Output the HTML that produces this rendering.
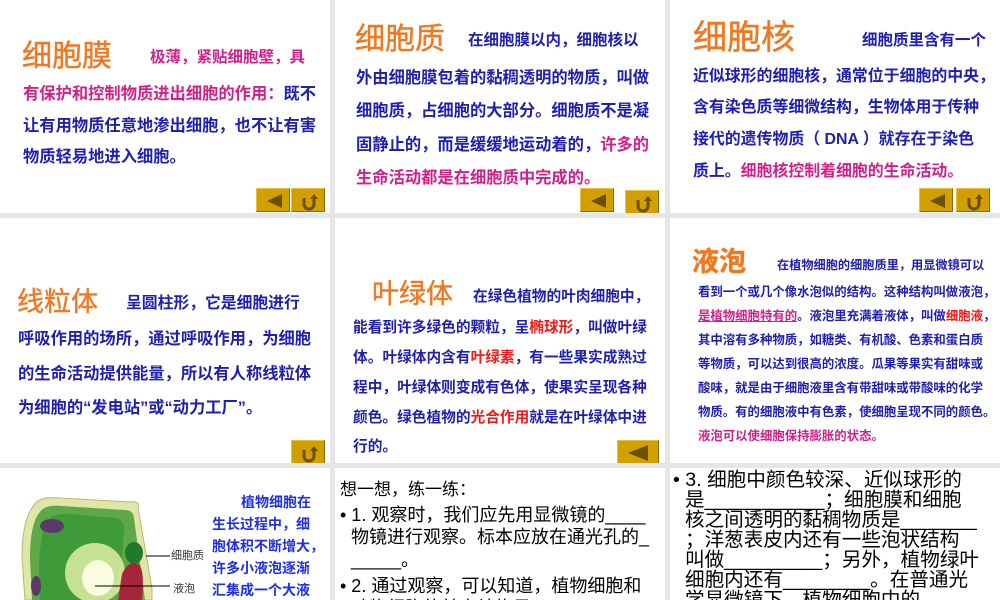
<!DOCTYPE html>
<html><head><meta charset="utf-8"><style>
*{margin:0;padding:0;box-sizing:border-box}
body{width:1000px;height:600px;background:#e6e6e6;position:relative;overflow:hidden;font-family:"Liberation Sans","Noto Sans CJK SC",sans-serif}
.p{position:absolute;background:#fff;overflow:hidden}
.l{position:absolute;white-space:nowrap;font-weight:bold;color:#2020b0}
.t{position:absolute;white-space:nowrap;color:#f07820;font-weight:normal;-webkit-text-stroke:0.4px #f07820}
.m{color:#d0208a}.r{color:#f01818}
.b{position:absolute;width:34px;height:24px;background:#d1a000;border:1px solid #8a6a00;border-top-color:#e8c040;border-left-color:#e8c040}
.b svg{position:absolute;left:0;top:0}
.k{position:absolute;white-space:nowrap;color:#000;font-size:18px}
</style></head><body>

<!-- Row1 -->
<div class="p" style="left:0;top:0;width:330px;height:213px">
<div class="t" style="left:22px;top:31px;font-size:30px">细胞膜</div>
<div class="l m" style="left:150px;top:45px;font-size:15.5px">极薄，紧贴细胞壁，具</div>
<div class="l" style="left:23px;top:80px;font-size:16.3px"><span class="m">有保护和控制物质进出细胞的作用：</span>既不</div>
<div class="l" style="left:23px;top:112px;font-size:16.3px">让有用物质任意地渗出细胞，也不让有害</div>
<div class="l" style="left:23px;top:143px;font-size:16.3px">物质轻易地进入细胞。</div>
<div class="b" style="left:256px;top:188px"><svg width="34" height="24"><path d="M10 12 L25 5 L25 19Z" fill="#6a5000"/></svg></div>
<div class="b" style="left:291px;top:188px"><svg width="38" height="24"><path d="M12 9 V15 A5 5 0 0 0 22 15 V9" stroke="#6a5000" stroke-width="3" fill="none"/><path d="M18 10 L22 5 L26 10Z" fill="#6a5000"/></svg></div>
</div>

<div class="p" style="left:335px;top:0;width:330px;height:213px">
<div class="t" style="left:20px;top:14px;font-size:30px">细胞质</div>
<div class="l" style="left:133px;top:28px;font-size:15.5px">在细胞膜以内，细胞核以</div>
<div class="l" style="left:21px;top:64px;font-size:16.3px">外由细胞膜包着的黏稠透明的物质，叫做</div>
<div class="l" style="left:21px;top:97px;font-size:16.3px">细胞质，占细胞的大部分。细胞质不是凝</div>
<div class="l" style="left:21px;top:131px;font-size:16.3px">固静止的，而是缓缓地运动着的，<span class="m">许多的</span></div>
<div class="l m" style="left:21px;top:164px;font-size:16.3px">生命活动都是在细胞质中完成的。</div>
<div class="b" style="left:245px;top:188px"><svg width="34" height="24"><path d="M10 12 L25 5 L25 19Z" fill="#6a5000"/></svg></div>
<div class="b" style="left:290px;top:190px"><svg width="38" height="24"><path d="M12 9 V15 A5 5 0 0 0 22 15 V9" stroke="#6a5000" stroke-width="3" fill="none"/><path d="M18 10 L22 5 L26 10Z" fill="#6a5000"/></svg></div>
</div>

<div class="p" style="left:670px;top:0;width:330px;height:213px">
<div class="t" style="left:23px;top:10px;font-size:34px">细胞核</div>
<div class="l" style="left:192px;top:28px;font-size:15.5px">细胞质里含有一个</div>
<div class="l" style="left:23px;top:63px;font-size:15.9px">近似球形的细胞核，通常位于细胞的中央，</div>
<div class="l" style="left:23px;top:94px;font-size:15.9px">含有染色质等细微结构，生物体用于传种</div>
<div class="l" style="left:23px;top:126px;font-size:15.9px">接代的遗传物质（ DNA ）就存在于染色</div>
<div class="l" style="left:23px;top:158px;font-size:15.9px">质上。<span class="m">细胞核控制着细胞的生命活动。</span></div>
<div class="b" style="left:249px;top:188px"><svg width="34" height="24"><path d="M10 12 L25 5 L25 19Z" fill="#6a5000"/></svg></div>
<div class="b" style="left:286px;top:188px"><svg width="38" height="24"><path d="M12 9 V15 A5 5 0 0 0 22 15 V9" stroke="#6a5000" stroke-width="3" fill="none"/><path d="M18 10 L22 5 L26 10Z" fill="#6a5000"/></svg></div>
</div>

<!-- Row2 -->
<div class="p" style="left:0;top:218px;width:330px;height:245px">
<div class="t" style="left:17px;top:62px;font-size:27px">线粒体</div>
<div class="l" style="left:126px;top:72px;font-size:15.8px">呈圆柱形，它是细胞进行</div>
<div class="l" style="left:18px;top:107px;font-size:16.3px">呼吸作用的场所，通过呼吸作用，为细胞</div>
<div class="l" style="left:18px;top:142px;font-size:16.3px">的生命活动提供能量，所以有人称线粒体</div>
<div class="l" style="left:18px;top:176px;font-size:16.3px">为细胞的“发电站”或“动力工厂”。</div>
<div class="b" style="left:291px;top:222px"><svg width="38" height="24"><path d="M12 9 V15 A5 5 0 0 0 22 15 V9" stroke="#6a5000" stroke-width="3" fill="none"/><path d="M18 10 L22 5 L26 10Z" fill="#6a5000"/></svg></div>
</div>

<div class="p" style="left:335px;top:218px;width:330px;height:245px">
<div class="t" style="left:37px;top:54px;font-size:27px">叶绿体</div>
<div class="l" style="left:138px;top:67px;font-size:14.7px">在绿色植物的叶肉细胞中，</div>
<div class="l" style="left:18px;top:98px;font-size:14.7px">能看到许多绿色的颗粒，呈<span class="r">椭球形</span>，叫做叶绿</div>
<div class="l" style="left:18px;top:128px;font-size:14.7px">体。叶绿体内含有<span class="r">叶绿素</span>，有一些果实成熟过</div>
<div class="l" style="left:18px;top:158px;font-size:14.7px">程中，叶绿体则变成有色体，使果实呈现各种</div>
<div class="l" style="left:18px;top:188px;font-size:14.7px">颜色。绿色植物的<span class="r">光合作用</span>就是在叶绿体中进</div>
<div class="l" style="left:18px;top:217px;font-size:14.7px">行的。</div>
<div class="b" style="left:282px;top:222px;width:42px"><svg width="42" height="24"><path d="M10 12 L30 4 L30 20Z" fill="#6a5000"/></svg></div>
</div>

<div class="p" style="left:670px;top:218px;width:330px;height:245px">
<div class="t" style="left:22px;top:22px;font-size:27px;font-weight:bold">液泡</div>
<div class="l" style="left:107px;top:37px;font-size:12.2px">在植物细胞的细胞质里，用显微镜可以</div>
<div class="l" style="left:28px;top:64px;font-size:12.4px">看到一个或几个像水泡似的结构。这种结构叫做液泡，</div>
<div class="l" style="left:28px;top:88px;font-size:12.4px"><span class="m" style="text-decoration:underline">是植物细胞特有的</span>。液泡里充满着液体，叫做<span class="r">细胞液</span>，</div>
<div class="l" style="left:28px;top:112px;font-size:12.4px">其中溶有多种物质，如糖类、有机酸、色素和蛋白质</div>
<div class="l" style="left:28px;top:136px;font-size:12.4px">等物质，可以达到很高的浓度。瓜果等果实有甜味或</div>
<div class="l" style="left:28px;top:160px;font-size:12.4px">酸味，就是由于细胞液里含有带甜味或带酸味的化学</div>
<div class="l" style="left:28px;top:184px;font-size:12.4px">物质。有的细胞液中有色素，使细胞呈现不同的颜色。</div>
<div class="l m" style="left:28px;top:208px;font-size:12.4px">液泡可以使细胞保持膨胀的状态。</div>
</div>

<!-- Row3 -->
<div class="p" style="left:0;top:468px;width:330px;height:132px">
<svg width="200" height="132" style="position:absolute;left:0;top:0">
<path d="M35 36 Q40 28 60 30 L130 34 Q140 32 138 40 L152 120 L152 132 L25 132 L22 90 Q22 50 35 36Z" fill="#dfe6a8" stroke="#b9b870"/>
<path d="M40 44 Q45 36 62 38 L125 42 Q133 42 134 50 L145 132 L32 132 L30 90 Q30 55 40 44Z" fill="#5ea848"/>
<path d="M45 55 Q50 45 70 46 L115 50 Q125 52 124 62 L122 90 Q118 110 108 132 L40 132 Q36 90 45 55Z" fill="#3f9a3a"/>
<ellipse cx="95" cy="105" rx="30" ry="30" fill="#e9f3a8" opacity="0.8"/>
<ellipse cx="98" cy="110" rx="16" ry="18" fill="#fbfde0"/>
<ellipse cx="134" cy="85" rx="9" ry="11" fill="#1f7a2e"/>
<path d="M122 106 Q128 92 138 96 Q145 100 142 132 L118 132Z" fill="#a8243a"/>
<ellipse cx="52" cy="58" rx="12" ry="7" fill="#5a3a6a"/>
<ellipse cx="36" cy="118" rx="5" ry="10" fill="#5a3a6a"/>
<path d="M146 88 H170 M95 118 H170" stroke="#000" stroke-width="1"/>
</svg>
<div style="position:absolute;left:171px;top:79px;font-size:11px;color:#333">细胞质</div>
<div style="position:absolute;left:173px;top:112px;font-size:11px;color:#333">液泡</div>
<div class="l" style="left:241px;top:24px;font-size:14px;color:#2030e0">植物细胞在</div>
<div class="l" style="left:212px;top:46px;font-size:14px;color:#2030e0">生长过程中，细</div>
<div class="l" style="left:212px;top:68px;font-size:14px;color:#2030e0">胞体积不断增大，</div>
<div class="l" style="left:212px;top:90px;font-size:14px;color:#2030e0">许多小液泡逐渐</div>
<div class="l" style="left:212px;top:112px;font-size:14px;color:#2030e0">汇集成一个大液</div>
</div>

<div class="p" style="left:335px;top:468px;width:330px;height:132px">
<div class="k" style="left:5px;top:7px;font-size:17px">想一想，练一练：</div>
<div class="k" style="left:5px;top:33px">• 1. 观察时，我们应先用显微镜的____</div>
<div class="k" style="left:16px;top:55px">物镜进行观察。标本应放在通光孔的_</div>
<div class="k" style="left:16px;top:78px">_____。</div>
<div class="k" style="left:5px;top:104px">• 2. 通过观察，可以知道，植物细胞和</div>
<div class="k" style="left:16px;top:126px">动物细胞的基本结构是</div>
</div>

<div class="p" style="left:670px;top:468px;width:330px;height:132px">
<div class="k" style="left:3px;top:2px;font-size:19.6px;line-height:20px">• 3. 细胞中颜色较深、近似球形的</div>
<div class="k" style="left:15px;top:22px;font-size:19.6px;line-height:20px">是___________；细胞膜和细胞</div>
<div class="k" style="left:15px;top:42px;font-size:19.6px;line-height:20px">核之间透明的黏稠物质是_______</div>
<div class="k" style="left:15px;top:62px;font-size:19.6px;line-height:20px">；洋葱表皮内还有一些泡状结构</div>
<div class="k" style="left:15px;top:82px;font-size:19.6px;line-height:20px">叫做_________；另外，植物绿叶</div>
<div class="k" style="left:15px;top:102px;font-size:19.6px;line-height:20px">细胞内还有________。在普通光</div>
<div class="k" style="left:15px;top:122px;font-size:19.6px;line-height:20px">学显微镜下，植物细胞中的</div>
</div>
</body></html>
